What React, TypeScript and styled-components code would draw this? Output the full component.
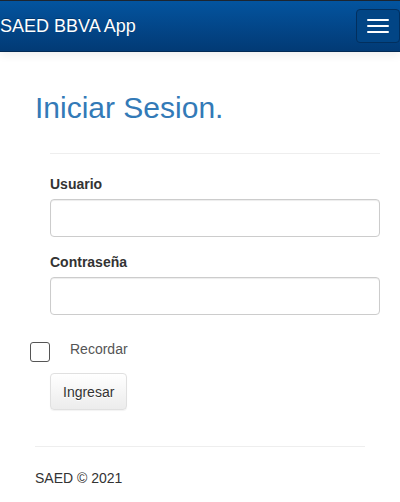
import React from "react";
import styled, { createGlobalStyle } from "styled-components";

const Global = createGlobalStyle`
  html, body {
    margin: 0;
    padding: 0;
    background: #fff;
  }
  body {
    font-family: "Liberation Sans", Arial, sans-serif;
    font-size: 14px;
    line-height: 1.42857;
    color: #333;
  }
  * {
    box-sizing: border-box;
  }
`;

const NavBar = styled.header`
  display: flex;
  align-items: center;
  justify-content: space-between;
  height: 52px;
  border-top: 1px solid #1c2530;
  border-bottom: 1px solid #022a55;
  background: linear-gradient(to bottom, #03549f 0%, #023a75 100%);
  box-shadow: 0 4px 8px rgba(0, 0, 0, 0.06);
`;

const Brand = styled.a`
  color: #fff;
  font-size: 18px;
  line-height: 20px;
  text-decoration: none;
  text-shadow: 0 -1px 0 rgba(0, 0, 0, 0.25);
`;

const Toggle = styled.button`
  display: flex;
  flex-direction: column;
  justify-content: center;
  gap: 4px;
  width: 44px;
  height: 34px;
  padding: 0 10px;
  background: #024585;
  border: 1px solid #022f5e;
  border-radius: 4px;
`;

const Bar = styled.span`
  display: block;
  width: 22px;
  height: 2px;
  background: #fff;
  border-radius: 1px;
`;

const Main = styled.main`
  padding: 39px 35px 0;
`;

const Title = styled.h2`
  margin: 0;
  font-size: 30px;
  line-height: 33px;
  font-weight: 500;
  color: #337ab7;
`;

const FormArea = styled.form`
  margin: 0 -15px 0 15px;
`;

const Divider = styled.hr<{ $top: number; $bottom: number }>`
  margin: ${(p) => p.$top}px 0 ${(p) => p.$bottom}px;
  border: 0;
  border-top: 1px solid #eee;
`;

const Group = styled.div`
  margin-bottom: 15px;
`;

const Label = styled.label`
  display: block;
  font-weight: bold;
  margin-bottom: 5px;
  line-height: 20px;
`;

const Input = styled.input`
  display: block;
  width: 100%;
  height: 38px;
  padding: 6px 12px;
  font: inherit;
  border: 1px solid #ccc;
  border-radius: 4px;
  box-shadow: inset 0 1px 1px rgba(0, 0, 0, 0.075);
  outline: none;
`;

const CheckRow = styled.label`
  display: flex;
  align-items: flex-start;
  gap: 20px;
  height: 20px;
  margin: 24px 0 0 -20px;
  line-height: 20px;
  color: #555;
`;

const Box = styled.input`
  appearance: none;
  flex: none;
  width: 20px;
  height: 20px;
  margin: 3px 0 0;
  border: 1px solid #555;
  border-radius: 3px;
  background: #fff;
`;

const Button = styled.button`
  display: block;
  margin-top: 14px;
  height: 37px;
  padding: 2px 12px 0;
  font: inherit;
  line-height: 33px;
  color: #333;
  text-shadow: 0 1px 0 #fff;
  background: linear-gradient(to bottom, #fff 0%, #ececec 100%);
  border: 1px solid #e0e0e0;
  border-radius: 4px;
  box-shadow: 0 1px 1px rgba(0, 0, 0, 0.05);
`;

const Footer = styled.footer`
  p {
    margin: 0;
    line-height: 20px;
  }
`;

export default function App() {
  return (
    <>
      <Global />
      <NavBar>
        <Brand href="#">SAED BBVA App</Brand>
        <Toggle type="button" aria-label="menu">
          <Bar />
          <Bar />
          <Bar />
        </Toggle>
      </NavBar>
      <Main>
        <Title>Iniciar Sesion.</Title>
        <FormArea onSubmit={(e) => e.preventDefault()}>
          <Divider $top={29} $bottom={20} />
          <Group>
            <Label htmlFor="usuario">Usuario</Label>
            <Input id="usuario" type="text" />
          </Group>
          <Group>
            <Label htmlFor="pass">Contraseña</Label>
            <Input id="pass" type="password" />
          </Group>
          <CheckRow>
            <Box type="checkbox" />
            <span>Recordar</span>
          </CheckRow>
          <Button type="submit">Ingresar</Button>
        </FormArea>
        <Footer>
          <Divider $top={36} $bottom={21} />
          <p>SAED © 2021</p>
        </Footer>
      </Main>
    </>
  );
}
